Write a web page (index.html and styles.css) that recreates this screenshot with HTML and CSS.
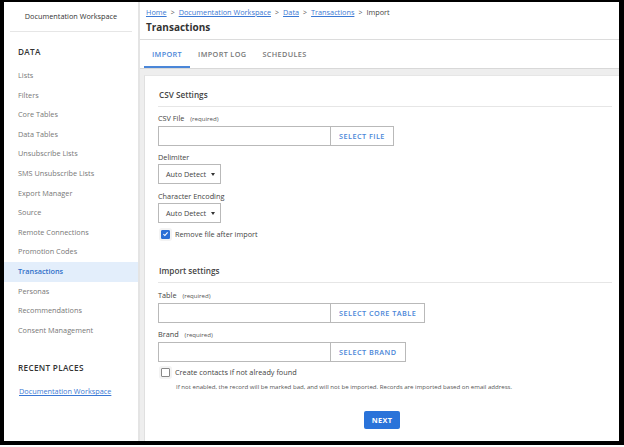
FILE: index.html
```html
<!DOCTYPE html>
<html>
<head>
<meta charset="utf-8">
<link rel="stylesheet" href="styles.css">
</head>
<body>
<div class="frame">
  <aside class="sidebar">
    <div class="ws">Documentation Workspace</div>
    <div class="sec-title">DATA</div>
    <ul class="nav">
      <li>Lists</li>
      <li>Filters</li>
      <li>Core Tables</li>
      <li>Data Tables</li>
      <li>Unsubscribe Lists</li>
      <li>SMS Unsubscribe Lists</li>
      <li>Export Manager</li>
      <li>Source</li>
      <li>Remote Connections</li>
      <li>Promotion Codes</li>
      <li class="active">Transactions</li>
      <li>Personas</li>
      <li>Recommendations</li>
      <li>Consent Management</li>
    </ul>
    <div class="sec-title recent">RECENT PLACES</div>
    <a class="recent-link" href="#">Documentation Workspace</a>
  </aside>
  <main class="main">
    <header class="head">
      <div class="crumbs"><a href="#">Home</a><span class="sep">&gt;</span><a href="#">Documentation Workspace</a><span class="sep">&gt;</span><a href="#">Data</a><span class="sep">&gt;</span><a href="#">Transactions</a><span class="sep">&gt;</span><span>Import</span></div>
      <h1 class="title">Transactions</h1>
    </header>
    <nav class="tabs">
      <div class="tab active">IMPORT</div>
      <div class="tab">IMPORT LOG</div>
      <div class="tab">SCHEDULES</div>
    </nav>
    <div class="body">
      <section class="card">
        <h2 class="group">CSV Settings</h2>
        <label class="lbl">CSV File <small>(required)</small></label>
        <div class="igroup"><div class="input"></div><div class="btn-o">SELECT FILE</div></div>
        <label class="lbl">Delimiter</label>
        <div class="select">Auto Detect <span class="caret"></span></div>
        <label class="lbl after-select">Character Encoding</label>
        <div class="select">Auto Detect <span class="caret"></span></div>
        <div class="check c1"><span class="box on"><svg viewBox="0 0 10 10" width="8" height="8"><path d="M2 5.2 L4.1 7.2 L8 2.8" fill="none" stroke="#fff" stroke-width="1.6"/></svg></span>Remove file after import</div>

        <h2 class="group g2">Import settings</h2>
        <label class="lbl after-g2">Table <small>(required)</small></label>
        <div class="igroup"><div class="input"></div><div class="btn-o">SELECT CORE TABLE</div></div>
        <label class="lbl">Brand <small>(required)</small></label>
        <div class="igroup"><div class="input"></div><div class="btn-o">SELECT BRAND</div></div>
        <div class="check"><span class="box"></span>Create contacts if not already found</div>
        <p class="help">If not enabled, the record will be marked bad, and will not be imported. Records are imported based on email address.</p>
        <div class="actions"><div class="btn-next">NEXT</div></div>
      </section>
    </div>
  </main>
</div>
</body>
</html>
```

FILE: styles.css
```css
* { box-sizing: border-box; }
html, body { margin: 0; padding: 0; background: #fff; }
body { font-family: "Open Sans", "Liberation Sans", sans-serif; color: #444; }
.frame {
  width: 624px; height: 445px;
  border-top: 2px solid #000; border-left: 4px solid #000;
  border-right: 5px solid #000; border-bottom: 4px solid #000;
  display: flex; overflow: hidden;
}
.sidebar { width: 136px; flex: none; border-right: 2px solid #e4e4e4; background: #fff; }
.ws { height: 30px; margin: 0 6px; border-bottom: 1px solid #e6e6e6; font-size: 7.3px; color: #333; text-align: center; line-height: 28px; }
.sec-title { margin: 14px 0 8px 14px; font-size: 8.2px; font-weight: 600; color: #333; line-height: 12px; letter-spacing: 0.3px; }
.nav { list-style: none; margin: 0; padding: 0; }
.nav li { height: 19.6px; line-height: 19.6px; padding-left: 14px; font-size: 7.3px; color: #777; }
.nav li.active { background: #e3eefb; color: #2f6fc9; font-weight: 600; }
.sec-title.recent { margin-top: 22px; margin-bottom: 0; }
.recent-link { display: block; margin: 11px 0 0 15px; font-size: 7.3px; color: #3a78d4; line-height: 12px; text-decoration: underline; }
.main { flex: 1; background: #eeeeee; display: flex; flex-direction: column; min-width: 0; }
.head { background: #fff; height: 38px; border-bottom: 1px solid #dcdcdc; padding: 4px 0 0 6px; }
.crumbs { font-size: 7.3px; line-height: 12px; color: #444; }
.crumbs a { color: #3a78d4; text-decoration: underline; }
.crumbs .sep { margin: 0 4px; color: #555; font-size: 7px; }
.title { margin: 1px 0 0; font-size: 10px; font-weight: 700; color: #333; line-height: 14px; }
.tabs { background: #fff; height: 29px; border-bottom: 1px solid #d8d8d8; display: flex; padding-left: 4px; }
.tab { padding: 2px 8px 0; line-height: 25px; font-size: 7.3px; font-weight: 600; letter-spacing: 0.35px; color: #777; border-bottom: 2px solid transparent; }
.tab.active { color: #4a86d8; border-bottom-color: #4a86d8; }
.body { flex: 1; padding: 6px 0 0 4px; display: flex; }
.card { flex: 1; background: #fff; border-left: 1px solid #e0e0e0; border-top: 1px solid #e6e6e6; padding: 13px 7px 0 13px; }
.group { margin: 0; font-size: 8.2px; font-weight: 600; color: #444; line-height: 12px; padding: 0 0 5px 1px; border-bottom: 1px solid #e6e6e6; }
.group.g2 { margin-top: 24px; }
.lbl { display: block; margin-top: 5px; font-size: 7.3px; color: #444; line-height: 12px; }
.lbl.after-select, .lbl.after-g2 { margin-top: 6px; }
.lbl small { font-size: 6.1px; margin-left: 4px; color: #555; }
.igroup { display: flex; margin-top: 1px; height: 20px; }
.input { width: 172px; border: 1px solid #b9b9b9; border-right: none; }
.btn-o { border: 1px solid #b9b9b9; padding: 0 8px; line-height: 18px; font-size: 7.3px; font-weight: 600; letter-spacing: 0.45px; color: #4a86d8; }
.select { width: 63px; height: 20px; margin-top: 1px; border: 1px solid #b9b9b9; font-size: 7.3px; color: #444; line-height: 18px; padding-left: 7px; display: flex; align-items: center; }
.caret { width: 0; height: 0; border-left: 2.5px solid transparent; border-right: 2.5px solid transparent; border-top: 3px solid #333; margin-left: 5px; }
.check { display: flex; align-items: center; margin-top: 3px; font-size: 7.3px; color: #444; line-height: 14px; padding-left: 3px; }
.check.c1 { margin-top: 4px; }
.box { width: 9px; height: 9px; border: 1px solid #888; border-radius: 1px; margin-right: 5px; display: flex; align-items: center; justify-content: center; box-shadow: 0 0 0 2px #f3f3f3; background: #fff; }
.box.on { background: #2a6fd6; border-color: #2a6fd6; }
.help { margin: 3px 0 0 18px; font-size: 6.1px; color: #555; line-height: 10px; }
.actions { display: flex; justify-content: center; margin-top: 19px; padding-right: 6px; }
.btn-next { background: #2a73d9; color: #fff; font-size: 7.3px; font-weight: 700; letter-spacing: 0.3px; padding: 0 8px; height: 18px; line-height: 18px; border-radius: 2px; }
```
